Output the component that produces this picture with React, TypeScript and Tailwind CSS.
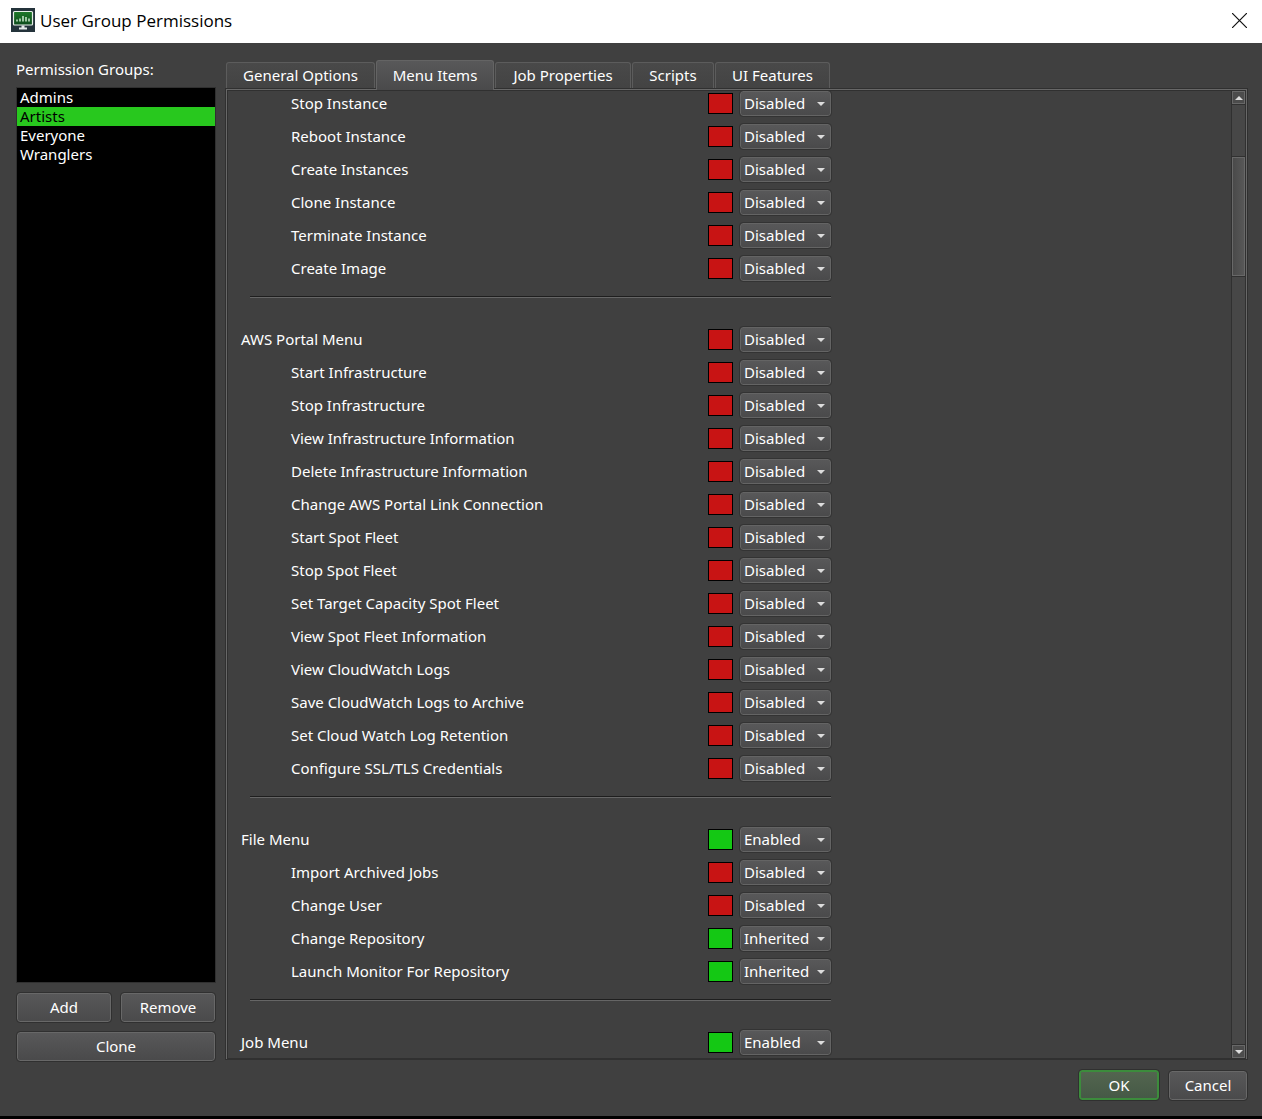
import { useState } from "react";

type Status = "Enabled" | "Disabled" | "Inherited";
type Item = { name: string; status: Status; heading?: boolean };

const off = (name: string): Item => ({ name, status: "Disabled" });

const sections: Item[][] = [
  [
    "Stop Instance",
    "Reboot Instance",
    "Create Instances",
    "Clone Instance",
    "Terminate Instance",
    "Create Image",
  ].map(off),
  [
    { name: "AWS Portal Menu", status: "Disabled", heading: true },
    ...[
      "Start Infrastructure",
      "Stop Infrastructure",
      "View Infrastructure Information",
      "Delete Infrastructure Information",
      "Change AWS Portal Link Connection",
      "Start Spot Fleet",
      "Stop Spot Fleet",
      "Set Target Capacity Spot Fleet",
      "View Spot Fleet Information",
      "View CloudWatch Logs",
      "Save CloudWatch Logs to Archive",
      "Set Cloud Watch Log Retention",
      "Configure SSL/TLS Credentials",
    ].map(off),
  ],
  [
    { name: "File Menu", status: "Enabled", heading: true },
    off("Import Archived Jobs"),
    off("Change User"),
    { name: "Change Repository", status: "Inherited" },
    { name: "Launch Monitor For Repository", status: "Inherited" },
  ],
  [{ name: "Job Menu", status: "Enabled", heading: true }],
];

const tabs = [
  { name: "General Options", width: "min-w-[149px]" },
  { name: "Menu Items", width: "min-w-[118px]" },
  { name: "Job Properties", width: "min-w-[136px]" },
  { name: "Scripts", width: "min-w-[82px]" },
  { name: "UI Features", width: "min-w-[115px]" },
];

const groups = ["Admins", "Artists", "Everyone", "Wranglers"];

const buttonLook =
  "rounded-[3px] border border-[#686868] bg-linear-to-b from-[#585859] to-[#4a4a4b] text-center outline outline-[#303030]";

function AppIcon() {
  return (
    <svg width="24" height="24" viewBox="0 0 24 24" aria-hidden="true">
      <defs>
        <linearGradient id="screen" x1="0" y1="0" x2="0" y2="1">
          <stop offset="0" stopColor="#1f7a2a" />
          <stop offset="1" stopColor="#0c4a1c" />
        </linearGradient>
      </defs>
      <rect width="24" height="24" fill="#24333b" />
      <rect x="2.5" y="3.5" width="19" height="13.5" rx="1" fill="url(#screen)" stroke="#e8efe9" strokeWidth="1.2" />
      <path d="M6 13.5v-2M9 13.5v-3M12 13.5V8M15 13.5V9M18 13.5v-3" stroke="#d9f2da" strokeWidth="1.4" />
      <path d="M10.5 17.5h3v2H16v2H8v-2h2.5z" fill="#e4e9e9" />
    </svg>
  );
}

function PermissionRow({ item }: { item: Item }) {
  const [status, setStatus] = useState<Status>(item.status);
  const id = item.name.replace(/[^A-Za-z]+/g, "-").toLowerCase();
  return (
    <div className="flex h-[25px] items-center">
      <label htmlFor={id} className={item.heading ? "flex-1" : "flex-1 pl-[50px]"}>
        {item.name}
      </label>
      <span
        className={
          status === "Disabled"
            ? "mr-[7px] h-[21px] w-[25px] border border-black bg-[#c81414]"
            : "mr-[7px] h-[21px] w-[25px] border border-black bg-[#14c814]"
        }
      />
      <span className="relative">
        <select
          id={id}
          value={status}
          onChange={(e) => setStatus(e.target.value as Status)}
          className="block h-[25px] w-[91px] appearance-none rounded-[3px] border border-[#646464] bg-linear-to-b from-[#585859] to-[#4a4a4b] pl-[3px] outline outline-[#333333]"
        >
          <option>Enabled</option>
          <option>Disabled</option>
          <option>Inherited</option>
        </select>
        <svg
          className="pointer-events-none absolute top-[11px] right-[6px]"
          width="8"
          height="4"
          viewBox="0 0 8 4"
          aria-hidden="true"
        >
          <path d="M0 0h8L4 4z" fill="#dcdcdc" />
        </svg>
      </span>
    </div>
  );
}

function ScrollButton({ up }: { up?: boolean }) {
  return (
    <button
      type="button"
      aria-label={up ? "Scroll up" : "Scroll down"}
      className="flex h-[13px] w-full items-center justify-center border border-[#686868] bg-[#4c4c4c]"
    >
      <svg width="8" height="4" viewBox="0 0 8 4" aria-hidden="true">
        <path d={up ? "M0 4h8L4 0z" : "M0 0h8L4 4z"} fill="#dcdcdc" />
      </svg>
    </button>
  );
}

export default function App() {
  const [group, setGroup] = useState("Artists");
  const [tab, setTab] = useState("Menu Items");

  return (
    <div className="flex h-screen flex-col bg-[#404040] font-['Noto_Sans',sans-serif] text-[15px] leading-[19px] text-white">
      <header className="flex h-[43px] shrink-0 items-center justify-between bg-white pr-[15px] pl-[11px] text-black">
        <div className="flex items-center gap-[5px] pb-[3px]">
          <AppIcon />
          <h1 className="pt-[2px] font-['Open_Sans',sans-serif] text-[17px] leading-[22px]">User Group Permissions</h1>
        </div>
        <button type="button" aria-label="Close" className="pb-[2px]">
          <svg width="15" height="15" viewBox="0 0 15 15" aria-hidden="true">
            <path d="M0 0l15 15M15 0L0 15" stroke="#111" strokeWidth="1.2" />
          </svg>
        </button>
      </header>

      <div className="flex min-h-0 flex-1 gap-[9px] pr-[14px] pl-[16px]">
        <aside className="flex w-[200px] shrink-0 flex-col pt-[17px]">
          <h2 id="groups-label">Permission Groups:</h2>
          <ul
            aria-labelledby="groups-label"
            className="mt-[8px] mb-[10px] flex-1 border border-[#303030] bg-black"
          >
            {groups.map((name) => (
              <li key={name}>
                <button
                  type="button"
                  onClick={() => setGroup(name)}
                  className={
                    name === group
                      ? "block h-[19px] w-full bg-[#28c81e] pl-[3px] text-left text-black"
                      : "block h-[19px] w-full pl-[3px] text-left"
                  }
                >
                  {name}
                </button>
              </li>
            ))}
          </ul>
          <div className="-mb-px grid grid-cols-2 gap-[10px] px-px">
            <button type="button" className={`h-[29px] ${buttonLook}`}>
              Add
            </button>
            <button type="button" className={`h-[29px] ${buttonLook}`}>
              Remove
            </button>
            <button type="button" className={`col-span-2 h-[29px] ${buttonLook}`}>
              Clone
            </button>
          </div>
        </aside>

        <main className="flex min-w-0 flex-1 flex-col pt-[17px]">
          <div role="tablist" className="flex h-[28px] shrink-0 items-end gap-px pl-px">
            {tabs.map((t) => (
              <button
                key={t.name}
                type="button"
                role="tab"
                aria-selected={t.name === tab}
                onClick={() => setTab(t.name)}
                className={`${t.width} ${
                  t.name === tab
                    ? "z-10 -mb-[2px] h-[30px] rounded-t-[3px] border border-b-0 border-[#646464] bg-linear-to-b from-[#585859] to-[#4a4a4b]"
                    : "h-[26px] rounded-t-[3px] border border-b-0 border-[#5c5c5c] bg-linear-to-b from-[#494949] to-[#434343]"
                }`}
              >
                {t.name}
              </button>
            ))}
          </div>
          <div className="flex min-h-0 flex-1 flex-col border border-[#303030]">
            <div className="flex min-h-0 flex-1 border border-b-0 border-[#686868]">
              <div className="flex min-h-0 flex-1 border border-[#303030]">
                <div className="min-w-0 flex-1 overflow-hidden pl-[13px]">
                  <div className="max-w-[590px]">
                    {sections.map((items, i) => (
                      <section key={items[0].name}>
                        {i > 0 && (
                          <div className="mt-[15px] mb-[29px] ml-[9px] h-[2px] border-t border-b border-t-[#1e1e1e] border-b-[#666666]" />
                        )}
                        <div className="flex flex-col gap-[8px]">
                          {items.map((item) => (
                            <PermissionRow key={item.name} item={item} />
                          ))}
                        </div>
                      </section>
                    ))}
                  </div>
                </div>
                <div className="flex w-[14px] flex-col border-l border-[#303030] bg-[#474747]">
                  <ScrollButton up />
                  <div className="flex min-h-0 flex-1 flex-col border-y border-[#303030] pt-[52px]">
                    <div className="h-[119px] border border-[#686868] bg-linear-to-r from-[#4a4a4a] to-[#575757] outline outline-[#303030]" />
                  </div>
                  <ScrollButton />
                </div>
              </div>
            </div>
          </div>
        </main>
      </div>

      <footer className="flex shrink-0 items-center justify-end gap-[10px] border-b-3 border-black pt-[10px] pr-[15px] pb-[16px]">
        <button
          type="button"
          className="h-[30px] w-[80px] rounded-[3px] border-2 border-[#3c8c3c] bg-linear-to-b from-[#53654f] to-[#465946] outline outline-[#303030]"
        >
          OK
        </button>
        <button type="button" className={`h-[29px] w-[78px] ${buttonLook}`}>
          Cancel
        </button>
      </footer>
    </div>
  );
}
